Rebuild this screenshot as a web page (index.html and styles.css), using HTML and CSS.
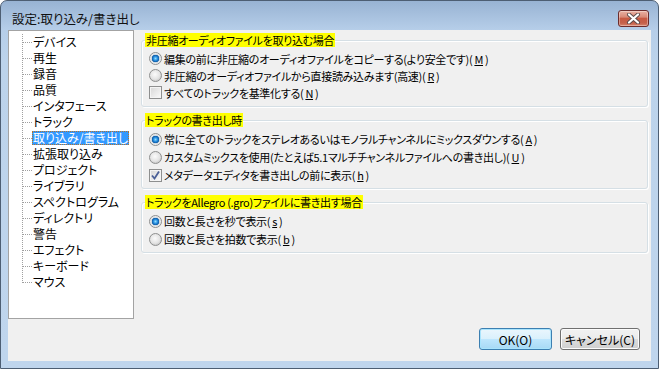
FILE: index.html
```html
<!DOCTYPE html>
<html lang="ja">
<head>
    <meta charset="UTF-8">
    <title>設定:取り込み/書き出し</title>
    <link rel="stylesheet" href="styles.css">
</head>
<body>
    <div class="window">
        <div class="titlebar">
            <span class="title">設定:取り込み/書き出し</span>
            <button class="close" type="button" aria-label="閉じる">
                <svg width="15" height="11" viewBox="0 0 15 11">
                    <path d="M3 1.5 L12 9.5 M12 1.5 L3 9.5" stroke="#5a4a4a" stroke-width="4" stroke-linecap="round"/>
                    <path d="M3 1.5 L12 9.5 M12 1.5 L3 9.5" stroke="#fff" stroke-width="2.2" stroke-linecap="round"/>
                </svg>
            </button>
        </div>

        <div class="client">
            <div class="main">
                <ul class="tree">
                    <li><span>デバイス</span></li>
                    <li><span>再生</span></li>
                    <li><span>録音</span></li>
                    <li><span>品質</span></li>
                    <li><span>インタフェース</span></li>
                    <li><span>トラック</span></li>
                    <li class="selected"><span>取り込み/書き出し</span></li>
                    <li><span>拡張取り込み</span></li>
                    <li><span>プロジェクト</span></li>
                    <li><span>ライブラリ</span></li>
                    <li><span>スペクトログラム</span></li>
                    <li><span>ディレクトリ</span></li>
                    <li><span>警告</span></li>
                    <li><span>エフェクト</span></li>
                    <li><span>キーボード</span></li>
                    <li><span>マウス</span></li>
                </ul>

                <div class="panel">
                    <fieldset class="group compact">
                        <legend>非圧縮オーディオファイルを取り込む場合</legend>
                        <label class="opt"><span class="radio checked"></span>編集の前に非圧縮のオーディオファイルをコピーする(より安全です)(<u>M</u>)</label>
                        <label class="opt"><span class="radio"></span>非圧縮のオーディオファイルから直接読み込みます(高速)(<u>R</u>)</label>
                        <label class="opt"><span class="check"></span>すべてのトラックを基準化する(<u>N</u>)</label>
                    </fieldset>

                    <fieldset class="group">
                        <legend>トラックの書き出し時</legend>
                        <label class="opt"><span class="radio checked"></span>常に全てのトラックをステレオあるいはモノラルチャンネルにミックスダウンする(<u>A</u>)</label>
                        <label class="opt"><span class="radio"></span>カスタムミックスを使用(たとえば5.1マルチチャンネルファイルへの書き出し)(<u>U</u>)</label>
                        <label class="opt">
                            <span class="check">
                                <svg width="11" height="11" viewBox="0 0 11 11">
                                    <path d="M2 5.5 L4.5 8.5 L9 1.5" fill="none" stroke="#4a5f97" stroke-width="1.8"/>
                                </svg>
                            </span>メタデータエディタを書き出しの前に表示(<u>h</u>)
                        </label>
                    </fieldset>

                    <fieldset class="group">
                        <legend>トラックをAllegro (.gro)ファイルに書き出す場合</legend>
                        <label class="opt"><span class="radio checked"></span>回数と長さを秒で表示(<u>s</u>)</label>
                        <label class="opt"><span class="radio"></span>回数と長さを拍数で表示(<u>b</u>)</label>
                    </fieldset>
                </div>
            </div>

            <div class="buttons">
                <button class="btn default" type="button">OK(O)</button>
                <button class="btn" type="button">キャンセル(C)</button>
            </div>
        </div>
    </div>
</body>
</html>
```

FILE: styles.css
```css
body {
    margin: 0;
    font-family: "Noto Sans CJK JP", "Noto Sans", sans-serif;
    font-size: 12px;
    font-feature-settings: "palt";
    color: #000;
}
.window {
    width: 659px;
    height: 369px;
    box-sizing: border-box;
    border: 1px solid #4d5e73;
    border-radius: 7px 7px 0 0;
    background: linear-gradient(#98b3d3 0, #b6cee9 29px, #bcd3eb 60px, #bfd5ed);
    display: flex;
    flex-direction: column;
}
.titlebar {
    height: 29px;
    box-sizing: border-box;
    padding: 5px 9px 0 11px;
    display: flex;
    align-items: center;
    justify-content: space-between;
}
.title {
    font-size: 12.5px;
    color: #111;
}
.close {
    width: 31px;
    height: 17px;
    padding: 0;
    border: 1px solid #6b2c2c;
    border-radius: 3px;
    background: linear-gradient(#eab1a3, #d98a78 40%, #c85a43 50%, #c4604a 80%, #d9836c);
    box-shadow: inset 0 0 0 1px rgba(255,255,255,0.35);
    display: flex;
    align-items: center;
    justify-content: center;
}
.client {
    flex: 1;
    margin: 0 7px 7px;
    background: #f0f0f0;
    display: flex;
    flex-direction: column;
}
.main {
    display: flex;
    gap: 7px;
    padding-right: 3px;
}
.tree {
    width: 126px;
    height: 289px;
    box-sizing: border-box;
    margin: 0;
    padding: 3px 0 0 13px;
    list-style: none;
    background: #fff;
    border: 1px solid #a3a3a3;
}
.tree li {
    height: 16px;
    display: flex;
    align-items: center;
    background: repeating-linear-gradient(#a0a0a0 0 1px, transparent 1px 2px) no-repeat 0 0 / 1px 100%;
}
.tree li:last-child {
    background-size: 1px 9px;
}
.tree li::before {
    content: "";
    width: 9px;
    margin-left: 1px;
    border-top: 1px dotted #a0a0a0;
}
.tree li span {
    padding: 0 1px;
    line-height: 14px;
    white-space: nowrap;
}
.tree li.selected span {
    background: #3399ff;
    color: #fff;
    outline: 1px dotted #b8742a;
    outline-offset: -1px;
}
.panel {
    flex: 1;
    padding-top: 3px;
    font-size: 11px;
    letter-spacing: -0.3px;
}
.group {
    margin: 0 0 6px;
    padding: 3px 7px 4px;
    min-width: 0;
    border: 1px solid #d5dfe5;
    border-radius: 3px;
    box-shadow: inset 1px 1px 0 #fff, 1px 1px 0 #fff;
}
.group.compact {
    padding-bottom: 5px;
}
.group legend {
    margin-left: -4px;
    padding: 0 1px;
    line-height: 14px;
    background: #ffff00;
}
.opt {
    height: 18px;
    display: flex;
    align-items: center;
    gap: 2px;
    white-space: nowrap;
}
.compact .opt {
    height: 17px;
}
.radio {
    width: 13px;
    height: 13px;
    box-sizing: border-box;
    border-radius: 50%;
    border: 1px solid #8e8f8f;
    background: radial-gradient(circle at 45% 40%, #fbfbfb 0, #e2e2e2 5px, #d2d2d2 6px);
}
.radio.checked {
    background: radial-gradient(circle at 50% 50%, #8fe0ff 0, #2a8fe0 2px, #0c5ba6 3.5px, #cfd8e0 4px, #f2f2f2 5.5px);
}
.check {
    width: 13px;
    height: 13px;
    box-sizing: border-box;
    border: 1px solid #8e8f8f;
    background: linear-gradient(135deg, #d6d6d6, #fbfbfb);
    box-shadow: inset 0 0 0 1px #f4f4f4;
    display: flex;
    align-items: center;
    justify-content: center;
}
.buttons {
    margin-top: auto;
    padding: 0 11px 11px;
    display: flex;
    justify-content: flex-end;
    gap: 8px;
}
.btn {
    width: 80px;
    height: 22px;
    padding: 0;
    font: inherit;
    color: #000;
    border: 1px solid #707070;
    border-radius: 3px;
    background: linear-gradient(#f2f2f2, #ebebeb 50%, #dddddd 50%, #cfcfcf);
    box-shadow: inset 0 0 0 1px #fcfcfc;
}
.btn.default {
    width: 73px;
    border-color: #3c7fb1;
    background: linear-gradient(#eaf6fd, #d9f0fc 50%, #bee6fd 50%, #a7d9f5);
    box-shadow: inset 0 0 0 1px #a9e4fd;
}
```
